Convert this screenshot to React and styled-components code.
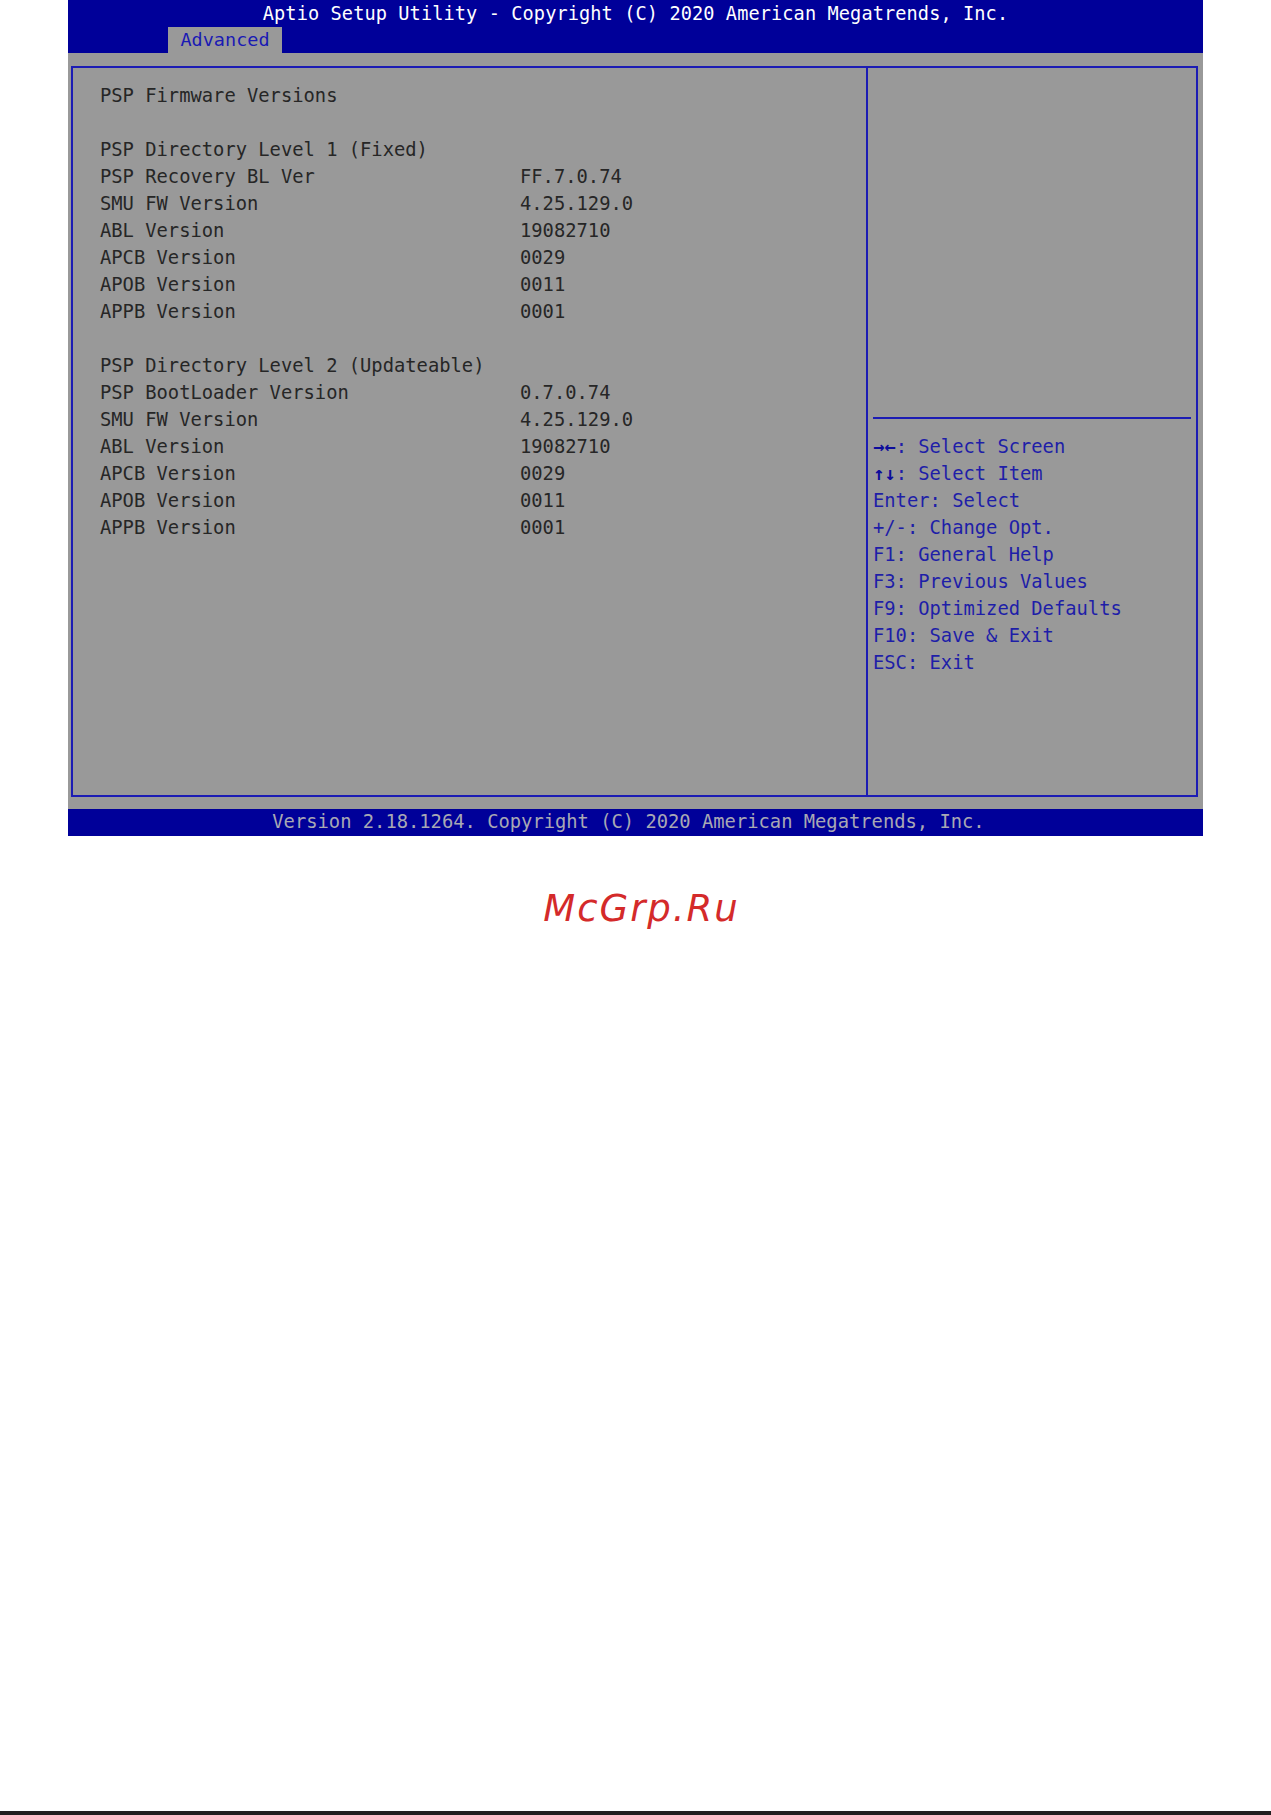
import React from "react";
import styled, { createGlobalStyle } from "styled-components";

const GlobalStyle = createGlobalStyle`
  html, body {
    margin: 0;
    padding: 0;
    background: #ffffff;
  }
`;

const BLUE = "#000099";
const GRAY = "#999999";
const LINE = "#1c1cb4";

const Page = styled.div`
  width: 1271px;
  min-height: 1815px;
  display: flex;
  flex-direction: column;
`;

const Screen = styled.div`
  margin-left: 68px;
  width: 1135px;
  font-family: "DejaVu Sans Mono", "Liberation Mono", monospace;
  font-size: 18.8px;
`;

const Header = styled.div`
  background: ${BLUE};
  height: 53px;
  display: flex;
  flex-direction: column;
`;

const Title = styled.div`
  height: 27px;
  line-height: 27px;
  color: #ffffff;
  text-align: center;
  font-size: 18.6px;
  letter-spacing: 0.1px;
  white-space: pre;
`;

const TabRow = styled.div`
  display: flex;
  padding-left: 100px;
`;

const Tab = styled.div`
  width: 114px;
  height: 26px;
  line-height: 26px;
  background: ${GRAY};
  color: #1a1ab4;
  text-align: center;
  font-size: 18.5px;
`;

const Body = styled.div`
  background: ${GRAY};
  padding: 13px 5px 12px 3px;
`;

const Panel = styled.div`
  border: 2px solid ${LINE};
  height: 727px;
  display: grid;
  grid-template-columns: 793px 2px 1fr;
`;

const Divider = styled.div`
  background: ${LINE};
`;

const MainList = styled.div`
  padding: 14px 0 0 27px;
  display: grid;
  grid-template-columns: 420px 1fr;
  grid-auto-rows: 27px;
  align-content: start;
  color: #262626;
  line-height: 27px;
  white-space: pre;
`;

const Label = styled.div`
  grid-column: ${(p) => (p.$wide ? "1 / span 2" : "1")};
`;

const Value = styled.div``;

const Blank = styled.div`
  grid-column: 1 / span 2;
`;

const HelpColumn = styled.div`
  display: flex;
  flex-direction: column;
  padding: 0 5px;
`;

const HelpTop = styled.div`
  height: 349px;
`;

const HelpRule = styled.div`
  height: 2px;
  background: ${LINE};
  margin-bottom: 14px;
`;

const HelpLine = styled.div`
  height: 27px;
  line-height: 27px;
  color: #1e1ea8;
  white-space: pre;
`;

const Keys = styled.span`
  font-weight: bold;
  color: #0c0c9c;
`;

const Footer = styled.div`
  background: ${BLUE};
  height: 27px;
  line-height: 26px;
  padding-right: 14px;
  color: #a8a8b4;
  text-align: center;
  white-space: pre;
`;

const Brand = styled.div`
  margin-top: 51px;
  padding-left: 12px;
  text-align: center;
  font-family: "DejaVu Sans", "Liberation Sans", sans-serif;
  font-style: oblique;
  font-size: 37px;
  letter-spacing: 2px;
  line-height: 44px;
  color: #d42a2a;
`;

const BottomRule = styled.div`
  margin-top: auto;
  height: 4px;
  background: #231f20;
`;

const rows = [
  { label: "PSP Firmware Versions", wide: true },
  null,
  { label: "PSP Directory Level 1 (Fixed)", wide: true },
  { label: "PSP Recovery BL Ver", value: "FF.7.0.74" },
  { label: "SMU FW Version", value: "4.25.129.0" },
  { label: "ABL Version", value: "19082710" },
  { label: "APCB Version", value: "0029" },
  { label: "APOB Version", value: "0011" },
  { label: "APPB Version", value: "0001" },
  null,
  { label: "PSP Directory Level 2 (Updateable)", wide: true },
  { label: "PSP BootLoader Version", value: "0.7.0.74" },
  { label: "SMU FW Version", value: "4.25.129.0" },
  { label: "ABL Version", value: "19082710" },
  { label: "APCB Version", value: "0029" },
  { label: "APOB Version", value: "0011" },
  { label: "APPB Version", value: "0001" },
];

const help = [
  { keys: "→←", text: ": Select Screen" },
  { keys: "↑↓", text: ": Select Item" },
  { text: "Enter: Select" },
  { text: "+/-: Change Opt." },
  { text: "F1: General Help" },
  { text: "F3: Previous Values" },
  { text: "F9: Optimized Defaults" },
  { text: "F10: Save & Exit" },
  { text: "ESC: Exit" },
];

export default function App() {
  return (
    <Page>
      <GlobalStyle />
      <Screen>
        <Header>
          <Title>Aptio Setup Utility - Copyright (C) 2020 American Megatrends, Inc.</Title>
          <TabRow>
            <Tab>Advanced</Tab>
          </TabRow>
        </Header>
        <Body>
          <Panel>
            <MainList>
              {rows.map((r, i) =>
                r === null ? (
                  <Blank key={i} />
                ) : r.wide ? (
                  <Label key={i} $wide>
                    {r.label}
                  </Label>
                ) : (
                  <React.Fragment key={i}>
                    <Label>{r.label}</Label>
                    <Value>{r.value}</Value>
                  </React.Fragment>
                )
              )}
            </MainList>
            <Divider />
            <HelpColumn>
              <HelpTop />
              <HelpRule />
              {help.map((h, i) => (
                <HelpLine key={i}>
                  {h.keys && <Keys>{h.keys}</Keys>}
                  {h.text}
                </HelpLine>
              ))}
            </HelpColumn>
          </Panel>
        </Body>
        <Footer>Version 2.18.1264. Copyright (C) 2020 American Megatrends, Inc.</Footer>
      </Screen>
      <Brand>McGrp.Ru</Brand>
      <BottomRule />
    </Page>
  );
}
